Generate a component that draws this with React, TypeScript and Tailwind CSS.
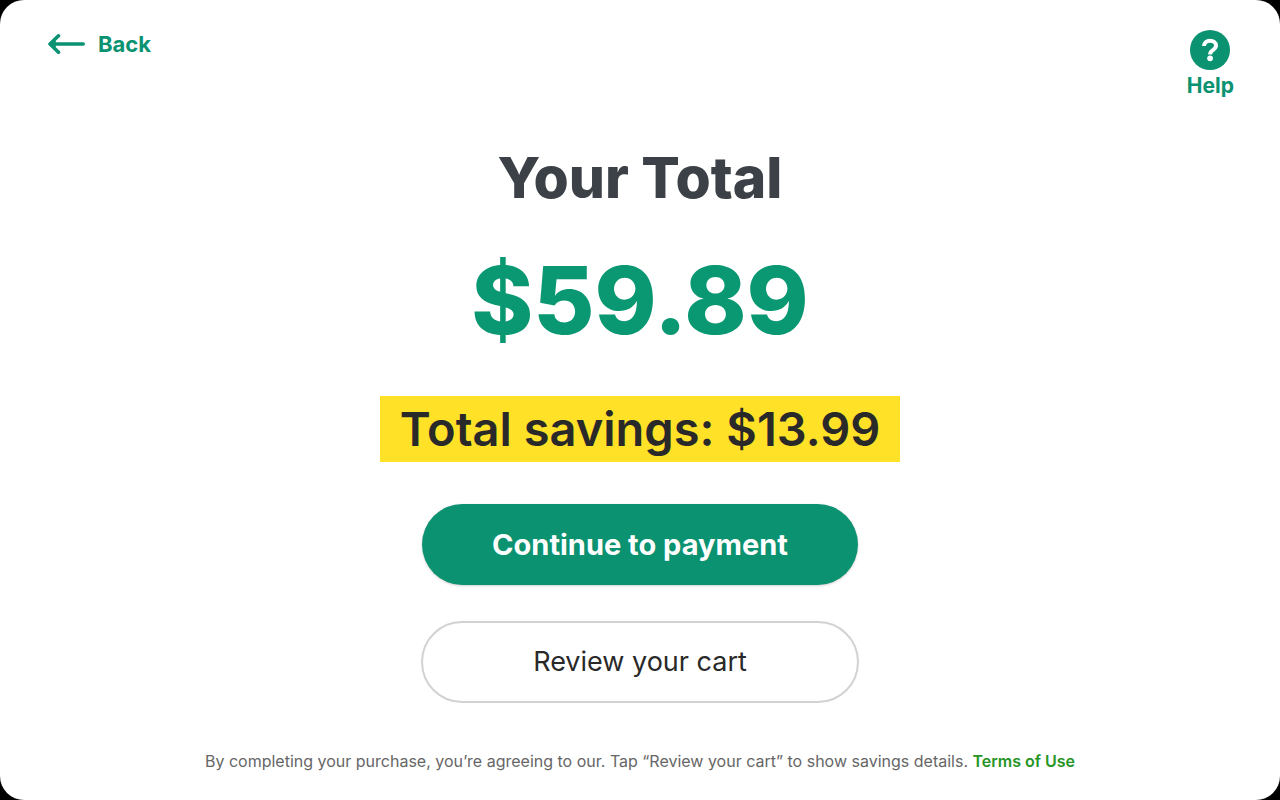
const ArrowIcon = () => {
  return (
    <svg
      className="w-[38px] h-6"
      viewBox="0 0 38 24"
      fill="none"
      stroke="currentColor"
      strokeWidth="3.6"
      strokeLinecap="round"
      strokeLinejoin="round"
      aria-hidden="true"
    >
      <path d="M35.2 12H3M10.5 3.8L2 12l8.5 8.2M6 9v6" />
    </svg>
  );
};

const HelpIcon = () => {
  return (
    <svg className="size-10" viewBox="0 0 40 40" fill="none" aria-hidden="true">
      <circle cx="20" cy="20" r="20" fill="currentColor" />
      <path
        d="M14 16C14 12.7 16.5 10.8 20 10.8c3.5 0 6 1.7 6 4.8 0 2.3-1.4 3.4-3.1 4.5-1.8 1.1-2.8 1.9-2.8 4.3"
        stroke="#fff"
        strokeWidth="4"
      />
      <circle cx="20.1" cy="28.3" r="2.9" fill="#fff" />
    </svg>
  );
};

const Header = () => {
  return (
    <header className="flex items-start justify-between pl-12 pr-[46px] pt-[30px]">
      <button className="flex items-center gap-3 h-7 text-[22px] font-bold">
        <ArrowIcon />
        <span>Back</span>
      </button>
      <button className="flex flex-col items-center gap-1 text-[21px] font-bold leading-6">
        <HelpIcon />
        <span>Help</span>
      </button>
    </header>
  );
};

const App = () => {
  return (
    <div className="bg-black font-['Inter',sans-serif] text-[#0a9271]">
      <div className="min-h-screen flex flex-col bg-white rounded-3xl">
        <Header />
        <main className="flex flex-col items-center px-6 pt-12 text-center">
          <h1 className="text-[57px] leading-16 font-extrabold text-[#3c4047]">
            Your Total
          </h1>
          <p className="mt-[42px] text-[94px] leading-24 font-extrabold text-[#0a9872]">
            $59.89
          </p>
          <p className="mt-12 w-full max-w-[520px] bg-[#ffe128] text-[47px] leading-[66px] font-semibold text-[#292929]">
            Total savings: $13.99
          </p>
          <button className="mt-[42px] w-full max-w-[436px] h-[81px] rounded-full bg-[#0a9271] text-[29px] font-bold text-white shadow-sm shadow-black/15">
            Continue to payment
          </button>
          <button className="mt-9 w-full max-w-[438px] h-[82px] rounded-full border-2 border-[#d2d2d2] text-[27px] text-[#292929]">
            Review your cart
          </button>
        </main>
        <footer className="mt-auto px-6 pb-[27px] text-center text-base leading-6 text-[#666]">
          By completing your purchase, you’re agreeing to our. Tap “Review your
          cart” to show savings details.{" "}
          <a href="#" className="font-semibold text-[#269526]">
            Terms of Use
          </a>
        </footer>
      </div>
    </div>
  );
};

export default App;
